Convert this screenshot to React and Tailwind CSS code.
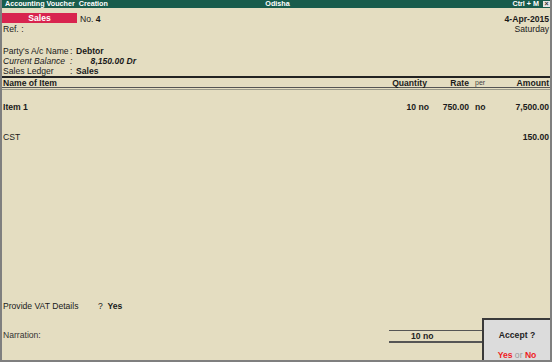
export default function App() {
  return (
    <div
      className="relative w-[552px] h-[362px] bg-[#e4ddc1] border-l-2 border-r-2 border-b-2 border-[#7f7f7f] flex flex-col text-[8.6px] leading-[10px] text-[#1a1a1a] overflow-hidden"
      style={{ fontFamily: '"Liberation Sans", Arial, sans-serif' }}
    >
      {/* title bar */}
      <div className="h-[8px] shrink-0 bg-[#185c4c] flex items-center justify-between text-white font-bold text-[7.2px] leading-[8px] pl-[3px] pr-[0px]">
        <span className="w-[200px]">Accounting Voucher&nbsp; Creation</span>
        <span>Odisha</span>
        <div className="w-[200px] flex items-center justify-end gap-[4px]">
          <span>Ctrl + M</span>
          <span className="w-[7px] h-[6px] bg-[#e6e6e6] text-[#333] flex items-center justify-center text-[7px] leading-[6px]">×</span>
        </div>
      </div>

      {/* voucher header */}
      <div className="h-[68px] shrink-0 flex flex-col pl-[1px] pr-[1px]">
        <div className="h-[10px] mt-[5px] flex justify-between">
          <div className="flex items-center">
            <div className="w-[75px] h-[10px] bg-[#d8244f] text-white font-bold flex items-center justify-center -ml-[1px]">Sales</div>
            <div className="ml-[3px] mt-[2px]">No. <span className="font-bold">4</span></div>
          </div>
          <div className="font-bold text-right mt-[1px]">4-Apr-2015</div>
        </div>
        <div className="h-[10px] mt-[1px] flex justify-between">
          <span>Ref. :</span>
          <span>Saturday</span>
        </div>
        <div className="h-[12px]"></div>
        <div className="flex h-[10px]">
          <span className="w-[67px]">Party's A/c Name</span>
          <span className="w-[6px]">:</span>
          <span className="font-bold">Debtor</span>
        </div>
        <div className="flex h-[10px] italic">
          <span className="w-[67px]">Current Balance</span>
          <span className="w-[6px]">:</span>
          <span className="w-[60px] text-right font-bold">8,150.00 Dr</span>
        </div>
        <div className="flex h-[10px]">
          <span className="w-[67px]">Sales Ledger</span>
          <span className="w-[6px]">:</span>
          <span className="font-bold">Sales</span>
        </div>
      </div>

      {/* column header */}
      <div className="h-[2px] shrink-0 bg-[#222]"></div>
      <div className="h-[10px] shrink-0 border-b border-[#555] flex font-bold items-center pl-[1px] pr-[1px]">
        <span className="flex-1">Name of Item</span>
        <span className="w-[60px] text-right">Quantity</span>
        <span className="w-[42px] text-right">Rate</span>
        <span className="w-[24px] pl-[6px] font-normal text-[7px] text-[#444]">per</span>
        <span className="w-[56px] text-right">Amount</span>
      </div>
      <div className="h-[1px] shrink-0 mt-[1px] bg-[#9a9a8a]"></div>

      {/* body */}
      <div className="flex-1 flex flex-col pl-[1px] pr-[1px]">
        <div className="flex font-bold mt-[12px] h-[10px]">
          <span className="flex-1">Item 1</span>
          <span className="w-[62px] text-right">10 no</span>
          <span className="w-[40px] text-right">750.00</span>
          <span className="w-[24px] pl-[6px]">no</span>
          <span className="w-[56px] text-right">7,500.00</span>
        </div>
        <div className="flex mt-[20px] h-[10px]">
          <span className="flex-1">CST</span>
          <span className="w-[56px] text-right font-bold">150.00</span>
        </div>

        <div className="flex-1"></div>

        <div className="flex h-[10px] mb-[19px]">
          <span className="w-[95px]">Provide VAT Details</span>
          <span>?&nbsp; <span className="font-bold">Yes</span></span>
        </div>
        <div className="flex h-[10px] mb-[20px]">
          <span className="flex-1 text-[#333]">Narration:</span>
        </div>
      </div>

      {/* totals bar */}
      <div className="absolute left-[387px] top-[330px] w-[93px]">
        <div className="h-[1px] bg-[#555]"></div>
        <div className="h-[10px] pl-[22px] font-bold text-[#222]">10 no</div>
        <div className="h-[2px] bg-[#555]"></div>
      </div>

      {/* accept dialog */}
      <div className="absolute left-[480px] top-[318px] w-[70px] h-[44px] bg-[#dcdcdc] border-2 border-[#3a3a3a] flex flex-col items-center justify-between pt-[10px] pb-0">
        <span className="font-bold text-[#222]">Accept ?</span>
        <span className="font-bold">
          <span className="text-[#ee1c25]">Yes</span>
          <span className="text-[#999] font-normal"> or </span>
          <span className="text-[#ee1c25]">No</span>
        </span>
      </div>
    </div>
  );
}
